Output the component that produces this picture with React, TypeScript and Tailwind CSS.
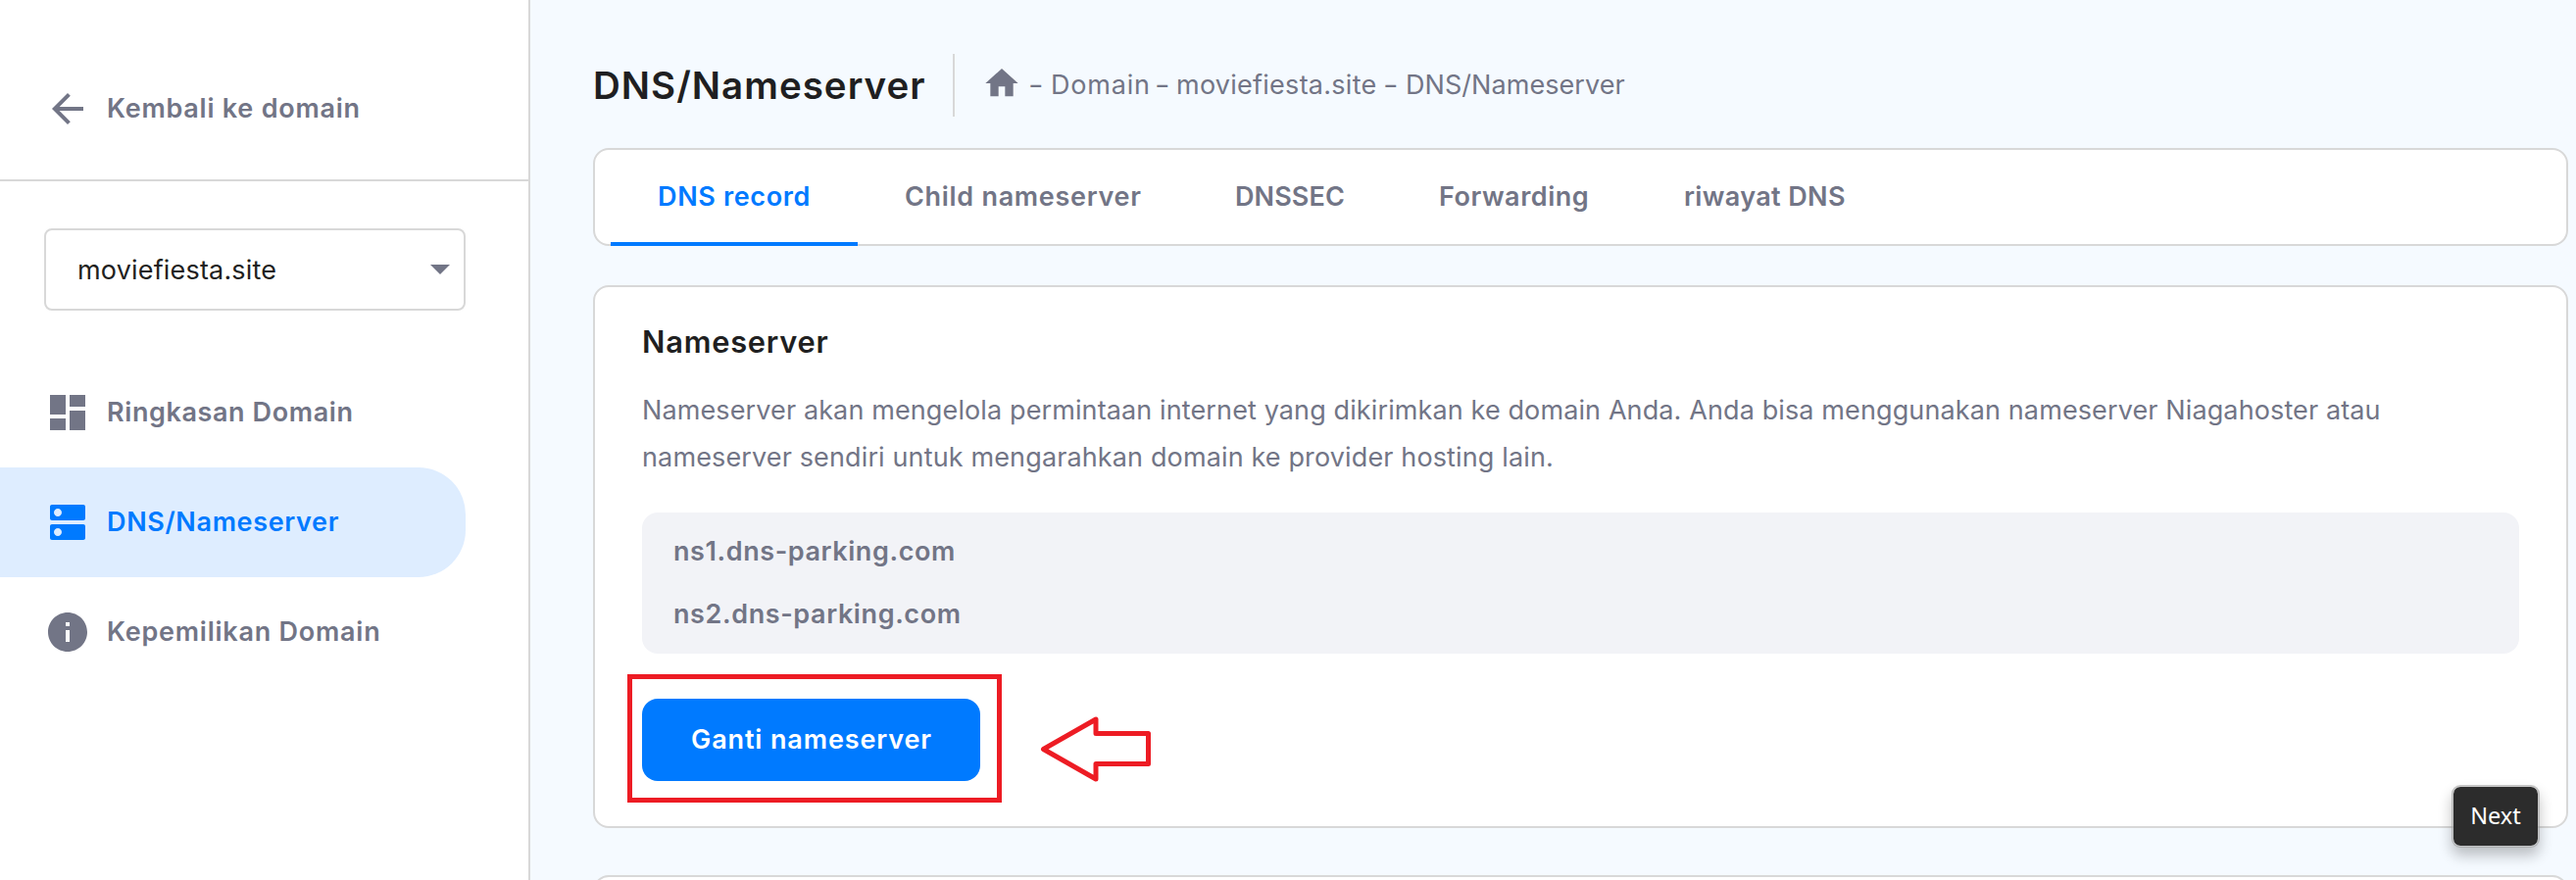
import type { ReactNode } from "react";

const tabs = [
  { label: "DNS record", box: "w-[252px] tracking-[0.64px]", active: true },
  { label: "Child nameserver", box: "w-[337px] tracking-[0.7px]" },
  { label: "DNSSEC", box: "w-[208px] tracking-[0.1px]" },
  { label: "Forwarding", box: "w-[250px] tracking-[0.53px]" },
  { label: "riwayat DNS", box: "w-[260px] tracking-[0.37px]" },
];

function Icon({ d, className = "size-12" }: { d: string; className?: string }) {
  return (
    <svg viewBox="0 0 24 24" fill="currentColor" className={`shrink-0 ${className}`}>
      <path d={d} />
    </svg>
  );
}

const nav: { label: string; icon: string; track: string; active?: boolean }[] = [
  {
    label: "Ringkasan Domain",
    icon: "M3 13h8V3H3v10zm0 8h8v-6H3v6zm10 0h8V11h-8v10zm0-18v6h8V3h-8z",
    track: "tracking-[0.6px]",
  },
  {
    label: "DNS/Nameserver",
    icon: "M20 13H4c-.55 0-1 .45-1 1v6c0 .55.45 1 1 1h16c.55 0 1-.45 1-1v-6c0-.55-.45-1-1-1zM7 19c-1.1 0-2-.9-2-2s.9-2 2-2 2 .9 2 2-.9 2-2 2zM20 3H4c-.55 0-1 .45-1 1v6c0 .55.45 1 1 1h16c.55 0 1-.45 1-1V4c0-.55-.45-1-1-1zM7 9c-1.1 0-2-.9-2-2s.9-2 2-2 2 .9 2 2-.9 2-2 2z",
    track: "tracking-[0.64px]",
    active: true,
  },
  {
    label: "Kepemilikan Domain",
    icon: "M12 2C6.48 2 2 6.48 2 12s4.480 10 10 10 10-4.480 10-10S17.520 2 12 2zm1 15h-2v-6h2v6zm0-8h-2V7h2v2z",
    track: "tracking-[0.76px]",
  },
];

function Card({ children, className = "" }: { children?: ReactNode; className?: string }) {
  return (
    <section className={`relative shrink-0 rounded-2xl border-2 border-[#d8d8d8] bg-white ${className}`}>
      {children}
    </section>
  );
}

function Dash({ className }: { className: string }) {
  return <span className={`origin-left scale-x-125 ${className}`}>-</span>;
}

function Sidebar() {
  return (
    <aside className="w-[541px] shrink-0 border-r-2 border-[#d8d8d8] bg-white">
      <a className="flex h-[185px] items-start gap-4 border-b-2 border-[#d8d8d8] pt-[87px] pl-[45px]">
        <Icon d="M20 11H7.830l5.590-5.590L12 4l-8 8 8 8 1.410-1.410L7.830 13H20v-2z" />
        <span className="font-semibold leading-[48px] tracking-[0.76px]">Kembali ke domain</span>
      </a>
      <div className="mt-12 ml-[45px] flex h-[84px] w-[430px] items-center justify-between rounded-lg border-2 border-[#d8d8d8] pl-8 text-[#1f1f21]">
        <span className="pt-0.5 tracking-[0.18px]">moviefiesta.site</span>
        <Icon d="M7 10l5 5 5-5z" className="mb-0.5 size-12 text-[#727586]" />
      </div>
      <nav className="mt-12 flex flex-col">
        {nav.map((n) => (
          <a
            key={n.label}
            className={`flex h-28 w-[475px] items-center gap-4 rounded-r-[48px] pl-[45px] ${
              n.active ? "bg-[#deedff] text-[#007aff]" : ""
            }`}
          >
            <Icon d={n.icon} />
            <span className={`font-semibold leading-[48px] ${n.track}`}>{n.label}</span>
          </a>
        ))}
      </nav>
    </aside>
  );
}

export default function App() {
  return (
    <div className="flex h-[898px] w-[2628px] overflow-hidden bg-[#f5faff] font-['Inter',sans-serif] text-[27px] whitespace-nowrap text-[#727586]">
      <Sidebar />
      <main className="relative flex grow flex-col pt-[55px] pr-2 pl-16">
        <header className="flex h-16 shrink-0 items-center">
          <h1 className="w-[367px] text-[38.5px] font-semibold leading-[64px] tracking-[1.03px] text-[#1f1f21]">
            DNS/Nameserver
          </h1>
          <div className="h-16 w-0.5 bg-[#d8d8d8]" />
          <div className="ml-7 flex items-center">
            <Icon d="M10 20v-6h4v6h5v-8h3L12 3 2 12h3v8z" className="mb-1 size-10" />
            <div className="flex pl-[7px]">
              <Dash className="w-[23px]" />
              <span className="w-[106px] tracking-[0.8px]">Domain</span>
              <Dash className="w-[22px]" />
              <span className="w-[211px] tracking-[0.26px]">moviefiesta.site</span>
              <Dash className="w-[23px]" />
              <span className="tracking-[0.06px]">DNS/Nameserver</span>
            </div>
          </div>
        </header>

        <Card className="mt-8 flex h-[100px] pl-4">
          {tabs.map((t) => (
            <div
              key={t.label}
              className={`-my-0.5 h-[100px] border-b-4 pl-12 font-semibold leading-[100px] ${t.box} ${
                t.active ? "border-[#007aff] text-[#007aff]" : "border-transparent"
              }`}
            >
              {t.label}
            </div>
          ))}
        </Card>

        <Card className="mt-10 h-[554px] px-12 pt-8">
          <h2 className="text-[30.8px] font-semibold leading-[48px] tracking-[0.78px] text-[#1f1f21]">Nameserver</h2>
          <p className="mt-[22px] leading-[48px]">
            <span className="block tracking-[0.116px]">
              Nameserver akan mengelola permintaan internet yang dikirimkan ke domain Anda. Anda bisa menggunakan
              nameserver Niagahoster atau
            </span>
            <span className="block tracking-[0.134px]">
              nameserver sendiri untuk mengarahkan domain ke provider hosting lain.
            </span>
          </p>
          <div className="mt-8 h-36 rounded-2xl bg-[#f2f3f7] pt-2 pl-8 font-semibold leading-[64px]">
            <div className="tracking-[0.58px]">ns1.dns-parking.com</div>
            <div className="tracking-[0.6px]">ns2.dns-parking.com</div>
          </div>
          <button className="mt-[46px] flex h-[84px] w-[345px] justify-center rounded-2xl bg-[#007aff] pl-px font-semibold leading-[84px] tracking-[0.87px] text-white">
            Ganti nameserver
          </button>
          <div className="absolute top-[395px] left-[33px] h-[131px] w-[382px] border-[5px] border-[#ed1c24]" />
          <svg
            viewBox="0 0 116 72"
            className="absolute top-[435px] left-[453px] h-[72px] w-[116px]"
            fill="none"
            stroke="#ed1c24"
            strokeWidth="5"
            strokeLinejoin="round"
          >
            <path d="M4.500 36.500 58 6V20.500H111.500V51.500H58V67Z" />
          </svg>
        </Card>

        <Card className="mt-12 h-40" />

        <div className="absolute top-[801px] left-[1960px] h-16 w-[90px] rounded-[9px] border-2 border-[#a0a0a0]/60 bg-[#2c2c2c] bg-clip-padding text-center font-['Noto_Sans',sans-serif] text-[23.5px] leading-[59px] text-white shadow-[0_8px_14px_rgba(0,0,0,0.24)]">
          Next
        </div>
      </main>
    </div>
  );
}
